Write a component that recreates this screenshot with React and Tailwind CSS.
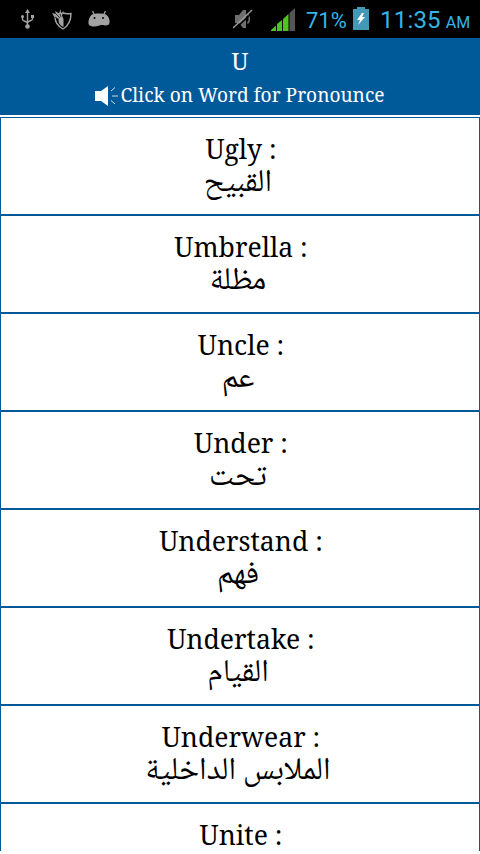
import React from 'react';

const words = [
  { en: 'Ugly :', ar: 'القبيح' },
  { en: 'Umbrella :', ar: 'مظلة' },
  { en: 'Uncle :', ar: 'عم' },
  { en: 'Under :', ar: 'تحت' },
  { en: 'Understand :', ar: 'فهم' },
  { en: 'Undertake :', ar: 'القيام' },
  { en: 'Underwear :', ar: 'الملابس الداخلية' },
  { en: 'Unite :' }
];

function StatusBar() {
  return (
    <div className="h-[38px] shrink-0 bg-black flex items-center font-['Roboto',sans-serif] text-[#33b5e5]">
      {/* usb */}
      <svg className="ml-5 w-[15px] h-[20px]" viewBox="0 0 15 20" fill="none" stroke="#a3a3a3" strokeWidth="1.4">
        <path d="M7.5 3v14M2.5 8v2.5c0 2 5 1.5 5 4M12.5 8v2c0 2-5 1.5-5 4" />
        <path d="M7.5 0l2.5 4H5z" fill="#a3a3a3" stroke="none" />
        <circle cx="7.5" cy="17.5" r="2.3" fill="#a3a3a3" stroke="none" />
        <circle cx="2.5" cy="7.5" r="1.5" fill="#a3a3a3" stroke="none" />
        <path d="M11 6h3v3h-3z" fill="#a3a3a3" stroke="none" />
      </svg>
      {/* shield */}
      <svg className="ml-[17px] w-[20px] h-[21px]" viewBox="0 0 20 21" fill="none" stroke="#a3a3a3" strokeWidth="1.4">
        <path d="M11 4c3 1 5 1 8 .5 0 7-2 12-8 15.5C5.5 17 3 13 3 8" />
        <path d="M0 4l4 1-1-3 4 2.5L8.5 0l.5 4L12 2l-2 4.5 1.5 3.5v8c-4-2-5-4-5-7.5L2 7.5z" fill="#a3a3a3" stroke="none" />
        <path d="M4 5l4 4M3 8l4 2.5M8 5l1 3" stroke="#000" strokeWidth="0.7" />
      </svg>
      {/* android head */}
      <svg className="ml-[16px] w-[22px] h-[18px]" viewBox="0 0 22 18">
        <path d="M4.5 1l2 4M17.5 1l-2 4" stroke="#a3a3a3" strokeWidth="1.3" />
        <path d="M4 4.5c3-1.5 11-1.5 14 0 3 2 4 6 3.5 8.5-1 3-4 2.5-7 2-3-.5-4 1.5-8 1.5-5 0-6.5-2-6-5C1 8.5 2 6 4 4.5z" fill="#a3a3a3" />
        <circle cx="6.5" cy="8" r="1" fill="#000" />
        <circle cx="15" cy="8" r="1" fill="#000" />
      </svg>
      {/* muted */}
      <svg className="ml-[123px] w-[20px] h-[20px]" viewBox="0 0 20 20">
        <path d="M2 6h4l4-5h3v18h-3l-4-5H2z" fill="#6f6f6f" />
        <path d="M14.5 5c2.5 2.5 2.5 7 0 9.5" fill="none" stroke="#6f6f6f" strokeWidth="1.6" />
        <path d="M2 20L20 3" stroke="#000" strokeWidth="1.5" />
        <path d="M0 19L19 1" stroke="#999" strokeWidth="1.4" />
      </svg>
      {/* signal */}
      <svg className="ml-[18px] w-[25px] h-[23px]" viewBox="0 0 25 23">
        <path d="M0 23v-1l5-4.5V23zM6 23v-7l5-4v11zM12 23V11l5.5-5v17z" fill="#4fc421" />
        <path d="M18.5 23V5L24 0v23z" fill="#555" />
      </svg>
      <span className="ml-[10px] mt-[3px] text-[22px] w-[40px] whitespace-nowrap">71%</span>
      <svg className="ml-[7px] -mt-[2px] w-[16px] h-[23px]" viewBox="0 0 16 23">
        <path d="M0 2h4V0h8v2h4v21H0z" fill="#4298b5" />
        <path d="M9 6l-5 7h3l-2 5 7-8H9l2-4z" fill="#fff" />
      </svg>
      <span className="ml-[11px] mt-[2px] text-[24px] tracking-[0.2px]">11:35</span>
      <span className="ml-[5px] mt-[7px] text-[16px]">AM</span>
    </div>
  );
}

function Header() {
  return (
    <div className="h-[77px] shrink-0 bg-[#005a9a] text-white flex flex-col items-center">
      <div className="h-[46px] leading-[46px] text-[23.5px]">U</div>
      <div className="flex items-center h-[23px] leading-[23px]">
        <svg className="w-[25px] h-[20px]" viewBox="0 0 25 20">
          <path d="M0 5h6l7-5v20l-7-5H0z" fill="#fff" />
          <path d="M16 5l4-3.5M17 10h6M16 14.5l4 3.5" stroke="#fff" strokeWidth="0.8" />
        </svg>
        <span className="text-[19.1px] whitespace-nowrap">Click on Word for Pronounce</span>
      </div>
    </div>
  );
}

function WordRow({ en, ar }) {
  return (
    <div className="h-[98px] shrink-0 border-b-2 border-[#005a9a] pt-[16px] text-center text-black">
      <div className="h-[31px] leading-[31px] text-[26.6px] pl-[2px]">{en}</div>
      {ar && (
        <div
          dir="rtl"
          className="mt-[2px] h-[35px] leading-[35px] pr-[4px] text-[31.7px] font-['Noto_Naskh_Arabic','DejaVu_Sans',sans-serif]">
          {ar}
        </div>
      )}
    </div>
  );
}

export default function App() {
  return (
    <div className="w-[480px] h-[854px] overflow-hidden bg-white flex flex-col font-['Noto_Serif','DejaVu_Serif_Condensed',serif]">
      <StatusBar />
      <Header />
      <div className="mt-[2px] h-[734px] shrink-0 overflow-hidden flex flex-col border-t border-x border-[#005a9a]">
        {words.map((word) => (
          <WordRow key={word.en} en={word.en} ar={word.ar} />
        ))}
      </div>
    </div>
  );
}
